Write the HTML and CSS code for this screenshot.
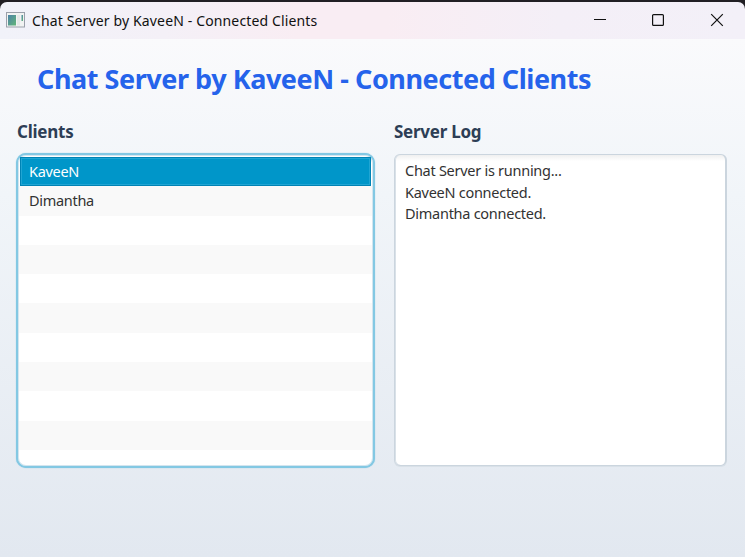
FILE: index.html
```html
<!DOCTYPE html>
<html lang="en">
<head>
<meta charset="utf-8">
<title>Chat Server by KaveeN - Connected Clients</title>
<link rel="stylesheet" href="styles.css">
</head>
<body>
<div class="window">
  <header class="titlebar">
    <svg class="app-icon" width="19" height="16" viewBox="0 0 19 16">
      <defs><linearGradient id="g" x1="0" y1="0" x2="1" y2="1"><stop offset="0" stop-color="#4c82a8"/><stop offset="1" stop-color="#62b678"/></linearGradient></defs>
      <rect x=".5" y=".5" width="18" height="14.5" fill="#f1f3f2" stroke="#9ba0ab"/>
      <rect x="2" y="3" width="8" height="10.5" fill="url(#g)"/>
      <rect x="11" y="3" width="3" height="10.5" fill="#e4e8e7"/>
      <rect x="15.5" y="3" width="1.5" height="6" fill="url(#g)"/>
    </svg>
    <span class="caption">Chat Server by KaveeN - Connected Clients</span>
    <svg class="controls" width="130" height="14" viewBox="0 0 130 14" fill="none" stroke="#111" stroke-width="1.2">
      <path d="M0 6.5H12"/>
      <rect x="58.6" y="1.6" width="10.8" height="10.8" rx="1"/>
      <path d="M117.2 1.2L128.8 12.8M128.8 1.2L117.2 12.8"/>
    </svg>
  </header>
  <main class="content">
    <h1>Chat Server by KaveeN - Connected Clients</h1>
    <div class="panes">
      <section class="clients">
        <h2>Clients</h2>
        <ul class="list">
          <li class="selected"><span>KaveeN</span></li>
          <li><span>Dimantha</span></li>
          <li></li><li></li><li></li><li></li><li></li><li></li><li></li><li></li><li></li>
        </ul>
      </section>
      <section class="log-pane">
        <h2>Server Log</h2>
        <div class="log">
          <p>Chat Server is running...</p>
          <p>KaveeN connected.</p>
          <p>Dimantha connected.</p>
        </div>
      </section>
    </div>
  </main>
</div>
</body>
</html>
```
FILE: styles.css
```css
* { box-sizing: border-box; margin: 0; padding: 0; }
body {
  width: 745px;
  height: 557px;
  overflow: hidden;
  background: #211f24;
  font-family: "Noto Sans", "Open Sans", sans-serif;
  white-space: nowrap;
}
.window {
  height: 555px;
  margin-top: 2px;
  border-radius: 7px 7px 0 0;
  overflow: hidden;
  display: flex;
  flex-direction: column;
}
.titlebar {
  height: 37px;
  flex: none;
  display: flex;
  align-items: center;
  padding: 0 21px 1px 6px;
  background: linear-gradient(90deg, #f1f2f9 0, #f4f0f7 22%, #f9edf3 40%, #f9edf3 52%, #f4eff7 75%, #f3f0f8 100%);
}
.app-icon { margin-right: 7px; }
.caption { font-size: 14px; letter-spacing: 0.14px; color: #111; }
.controls { margin-left: auto; }
.content {
  flex: 1;
  padding: 20px 18px 0 16px;
  background: linear-gradient(#fafafc, #f1f5f9 30%, #e2e8f0);
}
h1 {
  height: 40px;
  padding-left: 21px;
  line-height: 40px;
  font-size: 27px;
  letter-spacing: -0.45px;
  color: #2563eb;
}
.panes { display: flex; gap: 19px; margin-top: 20px; }
.clients { width: 359px; }
.log-pane { width: 333px; }
h2 {
  height: 26px;
  line-height: 26px;
  margin-bottom: 8px;
  padding-left: 1px;
  font-size: 17px;
  letter-spacing: -0.25px;
  color: #2d3e55;
}
.log-pane h2 { padding-left: 0; }
.list {
  list-style: none;
  height: 315px;
  overflow: hidden;
  padding: 2px 1px 0;
  background: #fff;
  border: 2px solid #83c8e3;
  border-radius: 10px;
  box-shadow: inset 0 0 0 1px #d3e5ef, 0 0 1px #7dc4e0;
}
.list li {
  height: 29.3px;
  padding-left: 10px;
  line-height: 29px;
  font-size: 14.5px;
  letter-spacing: -0.3px;
  color: #323232;
}
.list li:nth-child(even) { background: #f9f9f9; }
.list .selected {
  width: 351px;
  margin-left: 1px;
  padding-left: 9px;
  background: #0096c9;
  color: #fff;
  box-shadow: inset 0 0 0 1px #0083b5, inset 0 0 0 2px #20a5d3;
}
.log {
  height: 312px;
  margin-top: 9px;
  padding: 5px 0 0 10px;
  background: linear-gradient(#f0f0f0, #fff 6px);
  border: 1px solid #cbd5de;
  border-right-width: 2px;
  border-radius: 6px;
  box-shadow: inset 1px 0 #d9e1e8, 0 1px #d9e1e8;
}
.log p { height: 21.5px; line-height: 21.5px; font-size: 14.5px; letter-spacing: -0.27px; color: #323232; }
```
